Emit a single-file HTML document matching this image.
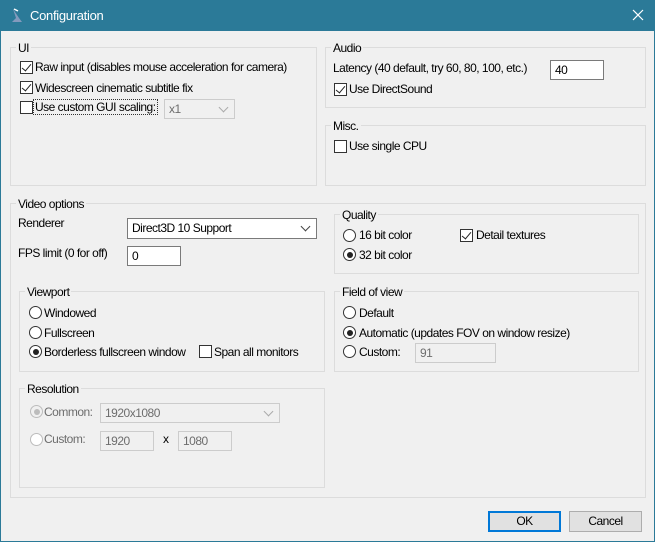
<!DOCTYPE html>
<html><head><meta charset="utf-8"><style>
*{box-sizing:border-box;margin:0;padding:0}
body{width:655px;height:542px;background:#2b7a98;font-family:"Liberation Sans",sans-serif;font-size:12px;letter-spacing:-0.5px;color:#000;position:relative;overflow:hidden}
.win{position:absolute;left:1px;top:31px;width:653px;height:510px;background:#f0f0f0}
.a{position:absolute}
.t{position:absolute;white-space:nowrap;line-height:14px}
.g{position:absolute;border:1px solid #dcdcdc}
.gl{position:absolute;background:#f0f0f0;padding:0 2px;line-height:14px;white-space:nowrap}
.cb{position:absolute;width:13px;height:13px;border:1px solid #333;background:#fff}
.cb.k::after{content:"";position:absolute;left:3px;top:0px;width:4px;height:8px;border:solid #222;border-width:0 1.5px 1.5px 0;transform:rotate(40deg)}
.rb{position:absolute;width:13px;height:13px;border:1px solid #333;border-radius:50%;background:#fff}
.rb.k::after{content:"";position:absolute;left:2.5px;top:2.5px;width:6px;height:6px;border-radius:50%;background:#222}
.rb.d{border-color:#bcbcbc;background:#f0f0f0}
.rb.d.k::after{background:#bcbcbc}
.in{position:absolute;border:1px solid #7a7a7a;background:#fff;padding:3px 4px;line-height:12px}
.in.d{border-color:#ccc;background:#f0f0f0;color:#6d6d6d}
.cmb{position:absolute;border:1px solid #7a7a7a;background:#fff;padding:3px 4px;line-height:12px}
.cmb::after{content:"";position:absolute;right:7px;top:4px;width:6px;height:6px;border:solid #444;border-width:0 1px 1px 0;transform:rotate(45deg)}
.cmb.d{border-color:#ccc;background:#f0f0f0;color:#6d6d6d}
.cmb.d::after{border-color:#aaa}
.btn{position:absolute;background:#e1e1e1;border:1px solid #adadad;text-align:center;line-height:18px}
</style></head><body>
<div class="t" style="left:30px;top:9px;color:#fff;font-size:13px;letter-spacing:-0.3px">Configuration</div>
<div class="a" style="left:10px;top:8px;width:14px;height:15px">
<svg width="14" height="15"><path d="M3 1 L9 10 L12 14 L2 14 L6 10 Z" fill="#9aa3c7" opacity=".8"/><path d="M4 1 L8 3" stroke="#fff" stroke-width="1.5"/></svg></div>
<svg class="a" style="left:632px;top:9px" width="12" height="12"><path d="M1 1L11 11M11 1L1 11" stroke="#fff" stroke-width="1.2"/></svg>
<div class="win"></div>

<!-- UI -->
<div class="g" style="left:10px;top:47px;width:307px;height:139px"></div>
<div class="gl" style="left:16px;top:41px">UI</div>
<div class="cb k" style="left:20px;top:61px"></div><div class="t" style="left:35px;top:60px">Raw input (disables mouse acceleration for camera)</div>
<div class="cb k" style="left:20px;top:81px"></div><div class="t" style="left:35px;top:81px">Widescreen cinematic subtitle fix</div>
<div class="cb" style="left:20px;top:101px"></div><div class="t" style="left:34px;top:100px;outline:1px dotted #333;padding:0 1px">Use custom GUI scaling:</div>
<div class="cmb d" style="left:164px;top:99px;width:71px;height:20px">x1</div>

<!-- Audio -->
<div class="g" style="left:325px;top:47px;width:321px;height:61px"></div>
<div class="gl" style="left:331px;top:41px">Audio</div>
<div class="t" style="left:333px;top:61px">Latency (40 default, try 60, 80, 100, etc.)</div>
<div class="in" style="left:550px;top:60px;width:54px;height:20px">40</div>
<div class="cb k" style="left:334px;top:83px"></div><div class="t" style="left:349px;top:82px">Use DirectSound</div>

<!-- Misc -->
<div class="g" style="left:325px;top:125px;width:321px;height:61px"></div>
<div class="gl" style="left:331px;top:119px">Misc.</div>
<div class="cb" style="left:334px;top:140px"></div><div class="t" style="left:349px;top:139px">Use single CPU</div>

<!-- Video -->
<div class="g" style="left:10px;top:203px;width:636px;height:295px"></div>
<div class="gl" style="left:16px;top:197px">Video options</div>
<div class="t" style="left:18px;top:216px">Renderer</div>
<div class="cmb" style="left:127px;top:218px;width:190px;height:21px">Direct3D 10 Support</div>
<div class="t" style="left:18px;top:246px">FPS limit (0 for off)</div>
<div class="in" style="left:127px;top:246px;width:54px;height:20px">0</div>

<div class="g" style="left:334px;top:214px;width:305px;height:60px"></div>
<div class="gl" style="left:340px;top:208px">Quality</div>
<div class="rb" style="left:343px;top:229px"></div><div class="t" style="left:359px;top:228px">16 bit color</div>
<div class="rb k" style="left:343px;top:248px"></div><div class="t" style="left:359px;top:248px">32 bit color</div>
<div class="cb k" style="left:460px;top:229px"></div><div class="t" style="left:476px;top:228px">Detail textures</div>

<div class="g" style="left:19px;top:291px;width:306px;height:81px"></div>
<div class="gl" style="left:25px;top:285px">Viewport</div>
<div class="rb" style="left:29px;top:306px"></div><div class="t" style="left:44px;top:306px">Windowed</div>
<div class="rb" style="left:29px;top:326px"></div><div class="t" style="left:44px;top:326px">Fullscreen</div>
<div class="rb k" style="left:29px;top:345px"></div><div class="t" style="left:44px;top:345px">Borderless fullscreen window</div>
<div class="cb" style="left:199px;top:345px"></div><div class="t" style="left:214px;top:345px">Span all monitors</div>

<div class="g" style="left:334px;top:291px;width:305px;height:81px"></div>
<div class="gl" style="left:340px;top:285px">Field of view</div>
<div class="rb" style="left:343px;top:306px"></div><div class="t" style="left:359px;top:306px">Default</div>
<div class="rb k" style="left:343px;top:326px"></div><div class="t" style="left:359px;top:326px">Automatic (updates FOV on window resize)</div>
<div class="rb" style="left:343px;top:345px"></div><div class="t" style="left:359px;top:345px">Custom:</div>
<div class="in d" style="left:415px;top:343px;width:81px;height:20px">91</div>

<div class="g" style="left:19px;top:388px;width:306px;height:100px"></div>
<div class="gl" style="left:25px;top:382px">Resolution</div>
<div class="rb d k" style="left:30px;top:405px"></div><div class="t" style="left:44px;top:405px;color:#6d6d6d">Common:</div>
<div class="cmb d" style="left:100px;top:403px;width:180px;height:20px">1920x1080</div>
<div class="rb d" style="left:30px;top:433px;background:#fff"></div><div class="t" style="left:44px;top:432px;color:#6d6d6d">Custom:</div>
<div class="in d" style="left:100px;top:431px;width:54px;height:20px">1920</div>
<div class="t" style="left:163px;top:432px">x</div>
<div class="in d" style="left:178px;top:431px;width:54px;height:20px">1080</div>

<div class="btn" style="left:488px;top:511px;width:73px;height:21px;border:2px solid #0078d7;line-height:17px">OK</div>
<div class="btn" style="left:569px;top:511px;width:73px;height:21px">Cancel</div>
</body></html>
